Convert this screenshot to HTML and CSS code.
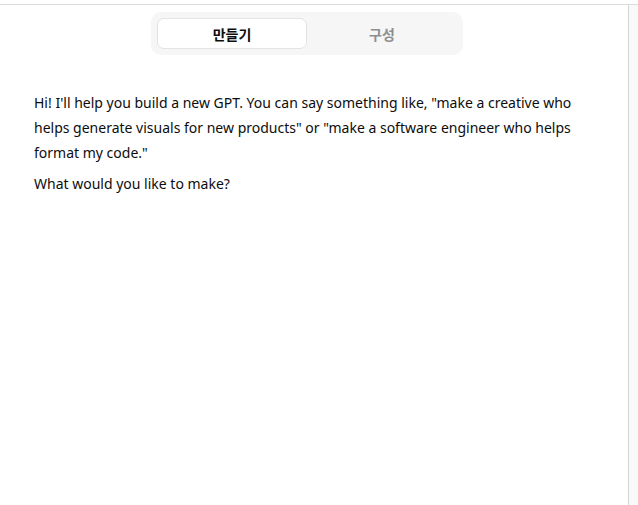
FILE: index.html
```html
<!DOCTYPE html>
<html lang="ko">
<head>
<meta charset="utf-8">
<link rel="stylesheet" href="styles.css">
</head>
<body>
<div class="page">
  <main class="main">
    <div class="tabs-row">
      <div class="tabs">
        <div class="tab active">만들기</div>
        <div class="tab">구성</div>
      </div>
    </div>
    <div class="chat">
      <p>Hi! I'll help you build a new GPT. You can say something like, "make a creative who helps generate visuals for new products" or "make a software engineer who helps format my code."</p>
      <p>What would you like to make?</p>
    </div>
  </main>
  <aside class="side"></aside>
</div>
</body>
</html>
```
FILE: styles.css
```css
html, body { margin: 0; padding: 0; background: #fff; }
body {
  font-family: "Noto Sans", "Noto Sans CJK KR", sans-serif;
  color: #0d0d0d;
  height: 505px;
  overflow: hidden;
}
.page {
  margin-top: 4px;
  border-top: 1px solid #dcdcdc;
  display: flex;
  height: 501px;
}
.main {
  border-right: 1px solid #d4d4d4;
  box-sizing: border-box;
  width: 629px;
}
.side {
  flex: 1;
  background: #f9f9f9;
}
.tabs-row {
  display: flex;
  justify-content: center;
  padding-top: 7px;
  padding-right: 14px;
}
.tabs {
  display: flex;
  width: 312px;
  height: 43px;
  box-sizing: border-box;
  padding: 6px;
  background: #f6f6f6;
  border-radius: 10px;
}
.tab {
  flex: 1;
  display: flex;
  align-items: center;
  justify-content: center;
  font-family: "Noto Sans CJK KR", sans-serif;
  font-size: 14px;
  font-weight: 700;
  color: #8e8e8e;
  border-radius: 7px;
  border: 1px solid transparent;
}
.tab.active {
  background: #fff;
  color: #0d0d0d;
  border-color: #e3e3e3;
}
.chat {
  padding: 35px 0 0 34px;
  width: 545px;
  font-size: 14px;
  line-height: 25px;
}
.chat p { margin: 0 0 6px 0; }
```
